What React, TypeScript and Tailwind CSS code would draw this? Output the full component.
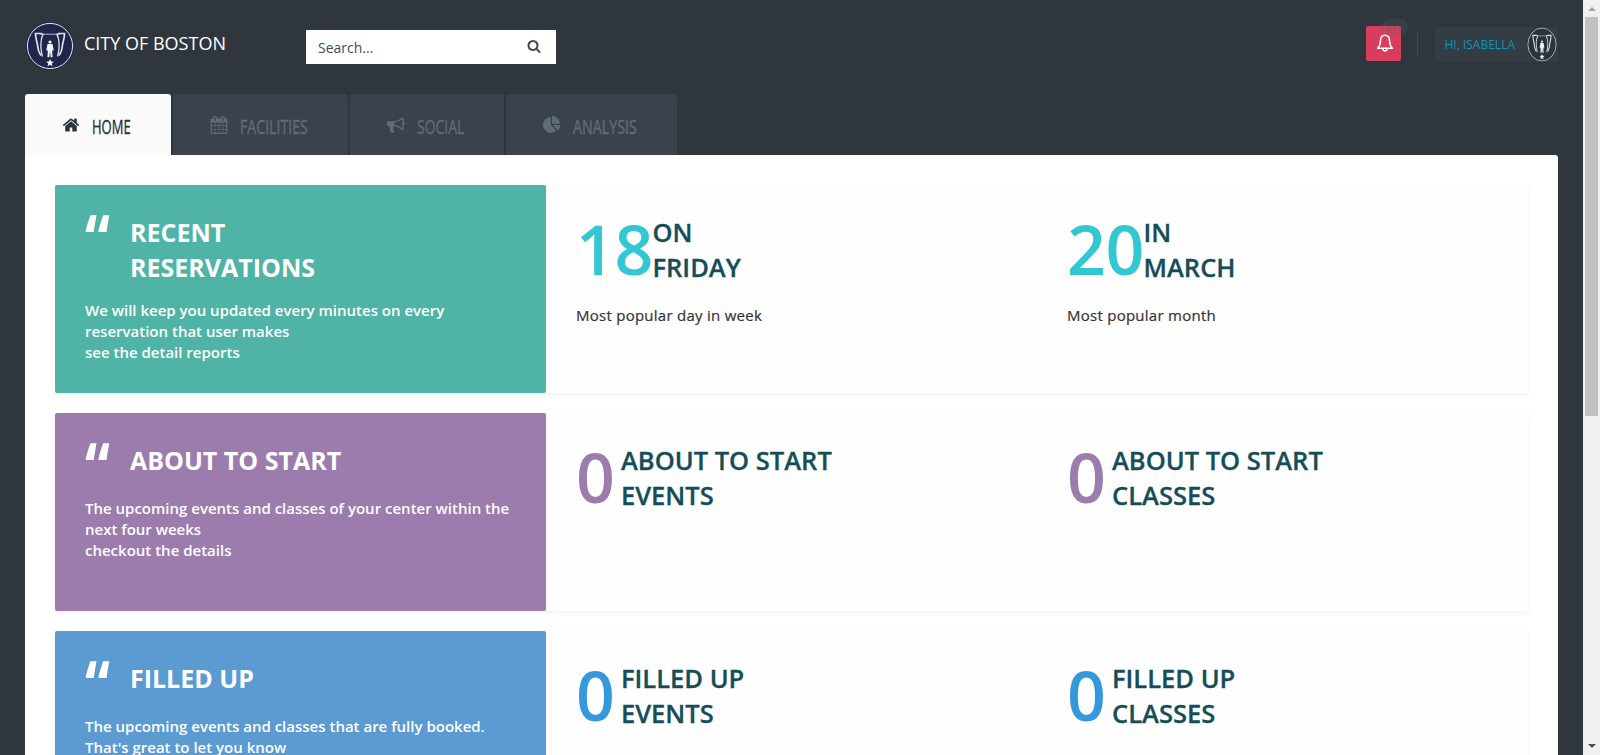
import React from 'react';

const paths = {
  home: 'M1472 992v480q0 26-19 45t-45 19h-384v-384h-256v384h-384q-26 0-45-19t-19-45v-480q0-1 .5-3t.5-3l575-474 575 474q1 2 1 6zm223-69l-62 74q-8 9-21 11h-3q-13 0-21-7l-692-577-692 577q-12 8-24 7-13-2-21-11l-62-74q-8-10-7-23.5t11-21.5l719-599q32-26 76-26t76 26l244 204v-195q0-14 9-23t23-9h192q14 0 23 9t9 23v408l219 182q10 8 11 21.5t-7 23.5z',
  calendar: 'M192 1664h288v-288h-288v288zm352 0h320v-288h-320v288zm-352-352h288v-320h-288v320zm352 0h320v-320h-320v320zm-352-384h288v-288h-288v288zm736 736h320v-288h-320v288zm-384-736h320v-288h-320v288zm768 736h288v-288h-288v288zm-384-352h320v-320h-320v320zm-352-864v-288q0-13-9.5-22.5t-22.5-9.5h-64q-13 0-22.5 9.5t-9.5 22.5v288q0 13 9.5 22.5t22.5 9.5h64q13 0 22.5-9.5t9.5-22.5zm736 864h288v-320h-288v320zm-384-384h320v-288h-320v288zm384 0h288v-288h-288v288zm32-480v-288q0-13-9.5-22.5t-22.5-9.5h-64q-13 0-22.5 9.5t-9.5 22.5v288q0 13 9.5 22.5t22.5 9.5h64q13 0 22.5-9.5t9.5-22.5zm384-64v1280q0 52-38 90t-90 38h-1408q-52 0-90-38t-38-90v-1280q0-52 38-90t90-38h128v-96q0-66 47-113t113-47h64q66 0 113 47t47 113v96h384v-96q0-66 47-113t113-47h64q66 0 113 47t47 113v96h128q52 0 90 38t38 90z',
  bullhorn: 'M1664 640q53 0 90.5 37.5t37.5 90.5-37.5 90.5-90.5 37.5v384q0 52-38 90t-90 38q-417-347-812-380-58 19-91 66t-31 100.5 40 92.5q-20 33-23 65.5t6 58 33.5 55 48 50 61.5 50.5q-29 58-111.5 83t-168.5 11.5-132-55.5q-7-23-29.5-87.5t-32-94.5-23-89-15-101 3.5-98.5 22-110.5h-122q-66 0-113-47t-47-113v-192q0-66 47-113t113-47h480q435 0 896-384 52 0 90 38t38 90v384zm-128 604v-954q-394 302-768 343v270q377 42 768 341z',
  pie: 'M768 890l546 546q-106 108-247.5 168t-298.5 60q-209 0-385.5-103t-279.5-279.5-103-385.5 103-385.5 279.5-279.5 385.5-103v762zm187 6h773q0 157-60 298.5t-168 247.5zm709-128h-768v-768q209 0 385.5 103t279.5 279.5 103 385.5z',
  search: 'M1216 832q0-185-131.5-316.5t-316.5-131.5-316.5 131.5-131.5 316.5 131.5 316.5 316.5 131.5 316.5-131.5 131.5-316.5zm512 832q0 52-38 90t-90 38q-54 0-90-38l-343-342q-179 124-399 124-143 0-273.5-55.5t-225-150-150-225-55.5-273.5 55.5-273.5 150-225 225-150 273.5-55.5 273.5 55.5 225 150 150 225 55.5 273.5q0 220-124 399l343 343q37 37 37 90z',
};

function Icon({ name, className }: { name: keyof typeof paths; className: string }) {
  return (
    <svg viewBox="0 0 1792 1792" className={className} fill="currentColor">
      <path d={paths[name]} />
    </svg>
  );
}

function Crest({ className, fill }: { className: string; fill: string }) {
  return (
    <svg viewBox="0 0 48 48" preserveAspectRatio="none" className={className}>
      <circle cx="24" cy="24" r="24" fill={fill} />
      <circle cx="24" cy="24" r="22.6" fill="none" stroke="#e4e6ee" strokeWidth="1" />
      <g fill="none" stroke="#dfe1e8">
        <path d="M16 12.2h16" strokeWidth="0.8" />
        <path d="M14.500 11.500L17 12.500L15.800 15.500" strokeWidth="1.400" />
        <path d="M33.500 11.500L31 12.500L32.200 15.500" strokeWidth="1.400" />
        <path d="M15.800 15C15.200 19 14.500 21 15 26C15.200 30 15.800 32 16.500 34.500" strokeWidth="1.300" />
        <path d="M32.200 15C32.800 19 33.500 21 33 26C32.800 30 32.200 32 31.500 34.500" strokeWidth="1.300" />
        <path d="M15.500 11.500H9.500C9.500 18 11.500 20 11.800 25C12 29 13.500 31 15 33.500" strokeWidth="1.700" />
        <path d="M32.500 11.500H38.500C38.500 18 36.500 20 36.200 25C36 29 34.500 31 33 33.500" strokeWidth="1.700" />
      </g>
      <g fill="#f4f5f8">
        <circle cx="24" cy="20" r="1.600" />
        <path d="M21.500 22h5l1.200 6-1 1.200-.7-2 .6 8h-1.900l-.7-6-.7 6h-1.900l.6-8-.7 2-1-1.200z" />
        <path d="M24 37l1.100 2.500 2.700.2-2 1.800.6 2.700-2.400-1.400-2.400 1.400.6-2.700-2-1.800 2.700-.2z" />
      </g>
    </svg>
  );
}

type Stat = { value: string; color: string; width: string; lines: [string, string]; note?: string };

type CardProps = {
  height: string;
  bg: string;
  title: string[];
  body: string[];
  bodyTop: string;
  stats: Stat[];
};

function Card({ height, bg, title, body, bodyTop, stats }: CardProps) {
  return (
    <section className={`grid shrink-0 grid-cols-3 bg-[#fefefe] shadow-[0_2px_5px_rgba(0,0,0,0.06)] ${height}`}>
      <div className={`overflow-hidden rounded-[2px] px-[30px] pt-[30px] text-white ${bg}`}>
        <div className="flex">
          <span className="-mt-[15px] h-[35px] w-[45px] origin-top scale-y-[1.2] text-[56px] leading-[62px] font-bold">“</span>
          <h2 className="text-[25px] leading-[35px] font-bold">
            {title.map((t) => (
              <span key={t} className="block">{t}</span>
            ))}
          </h2>
        </div>
        <p className={`text-[15px] leading-[21px] font-semibold whitespace-nowrap ${bodyTop}`}>
          {body.map((t) => (
            <span key={t} className="block">{t}</span>
          ))}
        </p>
      </div>
      {stats.map((s) => (
        <div key={s.lines.join()} className="px-[30px] pt-[30px]">
          <div className="flex">
            <span className={`shrink-0 text-[68px] leading-[68px] font-semibold tracking-[-0.5px] ${s.color} ${s.width}`}>
              {s.value}
            </span>
            <h3 className="text-[25.5px] leading-[35px] font-semibold text-[#154d58] [-webkit-text-stroke:0.3px_#154d58]">
              {s.lines.map((t) => (
                <span key={t} className="block">{t}</span>
              ))}
            </h3>
          </div>
          {s.note && <p className="pt-[20px] text-[15px] leading-[21px] tracking-[0.26px] text-[#333] [-webkit-text-stroke:0.2px_#333]">{s.note}</p>}
        </div>
      ))}
    </section>
  );
}

function Tab({ icon, label, box, labelClass }: { icon: keyof typeof paths; label: string; box: string; labelClass: string }) {
  return (
    <div className={`flex h-[61px] items-start rounded-t-[3px] pt-[22px] pl-[37px] ${box}`}>
      <Icon name={icon} className="mr-[12px] size-[18px] shrink-0" />
      <span className={`-mt-[4px] block origin-left text-[20.5px] leading-[28px] whitespace-nowrap [-webkit-text-stroke:0.4px_currentColor] ${labelClass}`}>{label}</span>
    </div>
  );
}

export default function App() {
  return (
    <div className="flex h-[755px] w-[1600px] overflow-hidden bg-[#2f363e] font-['Open_Sans',sans-serif]">
      <div className="flex flex-1 flex-col pr-[25px] pl-[25px]">
        <header className="flex h-[94px] shrink-0">
          <div className="flex w-[281px] pt-[22px] pl-[1px]">
            <Crest className="h-[48px] w-[48px]" fill="#20264a" />
            <span className="pt-[8px] pl-[10px] text-[18px] leading-[27px] text-white">CITY OF BOSTON</span>
          </div>
          <div className="mt-[30px] flex h-[34px] w-[250px] justify-between bg-white pt-[9px] pr-[15px] pl-[12px] text-[#3f4b56]">
            <span className="text-[14px] leading-[18px]">Search...</span>
            <Icon name="search" className="size-[14px]" />
          </div>
          <div className="ml-auto flex pt-[26px]">
            <div className="relative flex size-[35px] items-center justify-center rounded-[2px] bg-[#d93d5e] text-white">
              <svg viewBox="0 0 18 18" className="mt-[-2px] ml-[2px] size-[18px]" fill="none" stroke="currentColor" strokeWidth="1.500" strokeLinejoin="round">
                <path d="M9 1.200C5.800 1.200 4.500 4 4.500 6.500C4.500 10 3.600 12.200 1.600 14.200H16.400C14.400 12.200 13.500 10 13.500 6.500C13.500 4 12.200 1.200 9 1.200Z" />
                <path d="M6.800 14.500C6.900 16 7.700 16.900 9 16.900C10.300 16.900 11.100 16 11.200 14.500" />
              </svg>
              <span className="absolute -top-[7px] left-[15px] flex h-[17px] w-[27px] items-center justify-center rounded-full bg-[#606870]/20 text-[10px] text-[#2f363e]/25">
                215
              </span>
            </div>
            <div className="mt-[5px] ml-[16px] h-[25px] w-px bg-[#3f4a54]" />
            <div className="mt-[1px] ml-[17px] flex h-[35px] w-[123px] items-center justify-between rounded-[2px] bg-[#343c44] pr-[1px] pl-[9.5px]">
              <span className="text-[12px] leading-[18px] text-[#0795bb]">HI, ISABELLA</span>
              <Crest className="h-[35px] w-[30px]" fill="#2b333b" />
            </div>
          </div>
        </header>
        <nav className="flex shrink-0 gap-[2px]">
          <Tab icon="home" label="HOME" box="w-[146px] bg-[#fafafa] text-[#2b333b]" labelClass="scale-x-[0.635]" />
          <Tab icon="calendar" label="FACILITIES" box="w-[175px] bg-[#3a424b] text-[#616d75]" labelClass="scale-x-[0.69]" />
          <Tab icon="bullhorn" label="SOCIAL" box="w-[154px] bg-[#3a424b] text-[#616d75]" labelClass="scale-x-[0.68]" />
          <Tab icon="pie" label="ANALYSIS" box="w-[171px] bg-[#3a424b] text-[#616d75]" labelClass="scale-x-[0.695]" />
        </nav>
        <main className="flex min-h-0 flex-1 flex-col gap-[20px] overflow-hidden rounded-tr-[3px] bg-white px-[30px] pt-[30px]">
          <Card
            height="h-[208px]"
            bg="bg-[#4fb3a6]"
            title={['RECENT', 'RESERVATIONS']}
            body={['We will keep you updated every minutes on every', 'reservation that user makes', 'see the detail reports']}
            bodyTop="pt-[15px]"
            stats={[
              { value: '18', color: 'text-[#33c6d3]', width: 'w-[76.5px]', lines: ['ON', 'FRIDAY'], note: 'Most popular day in week' },
              { value: '20', color: 'text-[#33c6d3]', width: 'w-[76.5px]', lines: ['IN', 'MARCH'], note: 'Most popular month' },
            ]}
          />
          <Card
            height="h-[198px]"
            bg="bg-[#9b7cad]"
            title={['ABOUT TO START']}
            body={['The upcoming events and classes of your center within the', 'next four weeks', 'checkout the details']}
            bodyTop="pt-[20px]"
            stats={[
              { value: '0', color: 'text-[#9b7cad]', width: 'w-[45px]', lines: ['ABOUT TO START', 'EVENTS'] },
              { value: '0', color: 'text-[#9b7cad]', width: 'w-[45px]', lines: ['ABOUT TO START', 'CLASSES'] },
            ]}
          />
          <Card
            height="h-[198px]"
            bg="bg-[#5c9ad2]"
            title={['FILLED UP']}
            body={['The upcoming events and classes that are fully booked.', "That's great to let you know"]}
            bodyTop="pt-[20px]"
            stats={[
              { value: '0', color: 'text-[#3598dc]', width: 'w-[45px]', lines: ['FILLED UP', 'EVENTS'] },
              { value: '0', color: 'text-[#3598dc]', width: 'w-[45px]', lines: ['FILLED UP', 'CLASSES'] },
            ]}
          />
        </main>
      </div>
      <div className="flex w-[17px] flex-col items-center bg-[#f1f1f1]">
        <div className="flex h-[17px] items-center">
          <div className="border-x-[4px] border-b-[4px] border-x-transparent border-b-[#a3a3a3]" />
        </div>
        <div className="h-[399px] w-[13px] bg-[#c1c1c1]" />
        <div className="flex flex-1 items-end pb-[7px]">
          <div className="border-x-[4px] border-t-[4px] border-x-transparent border-t-[#505050]" />
        </div>
      </div>
    </div>
  );
}
